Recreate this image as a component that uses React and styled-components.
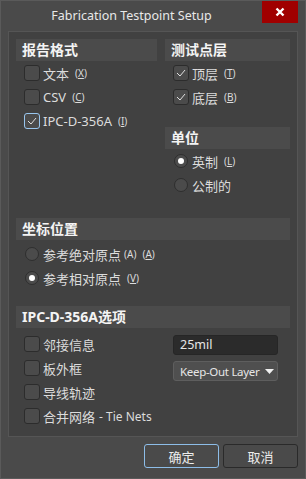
import React from "react";
import styled, { createGlobalStyle } from "styled-components";

const GlobalStyle = createGlobalStyle`
  html, body {
    margin: 0;
    padding: 0;
    background: #4a4a4a;
  }
  * {
    box-sizing: border-box;
  }
`;

const FONT = `"Noto Sans", "Open Sans", "Noto Sans CJK SC", sans-serif`;

const Window = styled.div`
  width: 306px;
  height: 479px;
  background: #4a4a4a;
  border: 1px solid #5a5a5a;
  font-family: ${FONT};
  font-size: 13px;
  color: #dcdcdc;
  display: flex;
  flex-direction: column;
`;

const TitleBar = styled.div`
  height: 29px;
  display: flex;
  align-items: flex-start;
`;

const Title = styled.div`
  flex: 1;
  text-align: center;
  font-size: 12.5px;
  line-height: 29px;
  color: #e8e8e8;
`;

const CloseBtn = styled.div`
  width: 36px;
  height: 22px;
  background: #a00000;
  margin-right: 7px;
  display: flex;
  align-items: center;
  justify-content: center;
`;

const Panel = styled.div`
  margin: 1px 7px 0 7px;
  height: 406px;
  background: #414141;
  border: 1px solid #555555;
  padding: 7px 7px 0 7px;
  display: flex;
  flex-direction: column;
`;

const TopGrid = styled.div`
  display: grid;
  grid-template-columns: 141px 125px;
  column-gap: 8px;
  align-items: start;
`;

const Col = styled.div`
  display: flex;
  flex-direction: column;
`;

const Header = styled.div`
  height: 22px;
  background: #4b4b4b;
  padding-left: 6px;
  font-weight: bold;
  font-size: 14px;
  line-height: 22px;
  color: #f4f4f4;
  margin-top: ${(p) => p.$mt || 0}px;
  margin-bottom: ${(p) => p.$mb || 0}px;
`;

const Row = styled.div`
  height: 24px;
  display: flex;
  align-items: center;
  padding-left: ${(p) => p.$pl || 8}px;
  gap: 3px;
  white-space: nowrap;
`;

const Box = styled.span`
  width: 16px;
  height: 16px;
  border-radius: 3px;
  background: #4b4b4b;
  border: 1px solid ${(p) => (p.$focus ? "#99c6ee" : "#2c2c2c")};
  display: inline-flex;
  align-items: center;
  justify-content: center;
  flex: none;
`;

const Radio = styled.span`
  width: 14px;
  height: 14px;
  border-radius: 50%;
  background: #4b4b4b;
  border: 1px solid #2e2e2e;
  display: inline-flex;
  align-items: center;
  justify-content: center;
  flex: none;
  margin-right: 1px;

  &::after {
    content: "";
    display: ${(p) => (p.$on ? "block" : "none")};
    width: 6px;
    height: 6px;
    border-radius: 50%;
    background: #ffffff;
  }
`;

const Key = styled.span`
  font-size: 10px;
  margin-left: ${(p) => (p.$tight ? 0 : 3)}px;
  color: #dcdcdc;

  u {
    text-decoration: underline;
  }
`;

const Label = styled.span`
  font-size: 13px;
`;

const Small = styled.span`
  font-size: 12px;
  margin-left: 1px;
`;

const Wide = styled.div`
  margin-top: ${(p) => p.$mt}px;
  display: flex;
  flex-direction: column;
`;

const IpcGrid = styled.div`
  display: grid;
  grid-template-columns: 157px 105px;
  margin-top: 4px;
`;

const Controls = styled.div`
  display: flex;
  flex-direction: column;
  gap: 6px;
  padding-top: 3px;
`;

const Input = styled.div`
  height: 20px;
  border-radius: 3px;
  background: #2b2b2b;
  border: 1px solid #262626;
  padding-left: 6px;
  line-height: 18px;
  font-size: 12.5px;
  color: #e6e6e6;
`;

const Select = styled.div`
  height: 20px;
  border-radius: 3px;
  background: #4f4f4f;
  border: 1px solid #5e5e5e;
  padding: 0 3px 0 6px;
  display: flex;
  align-items: center;
  justify-content: space-between;
  font-size: 11.5px;
  letter-spacing: -0.3px;
  white-space: nowrap;
  color: #e6e6e6;
`;

const Footer = styled.div`
  display: flex;
  justify-content: flex-end;
  gap: 4px;
  padding: 7px 7px 0 0;
`;

const Button = styled.div`
  width: 75px;
  height: 24px;
  border-radius: 3px;
  border: 1px solid ${(p) => (p.$primary ? "#8dbde8" : "#2a2a2a")};
  background: #4a4a4a;
  display: flex;
  align-items: center;
  justify-content: center;
  font-size: 13px;
  color: #ececec;
`;

const Check = () => (
  <svg width="10" height="8" viewBox="0 0 10 8">
    <path d="M1 4 L4 7 L9 1" fill="none" stroke="#e0e0e0" strokeWidth="1" />
  </svg>
);

const CheckRow = ({ checked, focus, label, k }) => (
  <Row>
    <Box $focus={focus}>{checked && <Check />}</Box>
    <Label>{label}</Label>
    {k && (
      <Key>
        (<u>{k}</u>)
      </Key>
    )}
  </Row>
);

const RadioRow = ({ on, label, k, pl }) => (
  <Row $pl={pl}>
    <Radio $on={on} />
    <Label>{label}</Label>
    {k && (
      <Key>
        (<u>{k}</u>)
      </Key>
    )}
  </Row>
);

const App = () => {
  return (
    <>
      <GlobalStyle />
      <Window>
        <TitleBar>
          <Title>Fabrication Testpoint Setup</Title>
          <CloseBtn>
            <svg width="10" height="10" viewBox="0 0 10 10">
              <path d="M1.5 1.5 L8.5 8.5 M8.5 1.5 L1.5 8.5" stroke="#fff" strokeWidth="2.4" />
            </svg>
          </CloseBtn>
        </TitleBar>
        <Panel>
          <TopGrid>
            <Col>
              <Header>报告格式</Header>
              <CheckRow label="文本" k="X" />
              <CheckRow label="CSV" k="C" />
              <CheckRow label="IPC-D-356A" k="I" checked focus />
            </Col>
            <Col>
              <Header>测试点层</Header>
              <CheckRow label="顶层" k="T" checked />
              <CheckRow label="底层" k="B" checked />
              <Header $mt={18}>单位</Header>
              <RadioRow label="英制" k="L" on pl={9} />
              <RadioRow label="公制的" pl={9} />
            </Col>
          </TopGrid>
          <Wide $mt={21}>
            <Header $mb={2}>坐标位置</Header>
            <Row $pl={9}>
              <Radio />
              <Label>参考绝对原点</Label>
              <Key $tight>(A)</Key>
              <Key>
                (<u>A</u>)
              </Key>
            </Row>
            <RadioRow label="参考相对原点" k="V" on pl={9} />
          </Wide>
          <Wide $mt={16}>
            <Header>IPC-D-356A选项</Header>
            <IpcGrid>
              <Col>
                <CheckRow label="邻接信息" />
                <CheckRow label="板外框" />
                <CheckRow label="导线轨迹" />
                <Row>
                  <Box />
                  <Label>合并网络</Label>
                  <Small>- Tie Nets</Small>
                </Row>
              </Col>
              <Controls>
                <Input>25mil</Input>
                <Select>
                  <span>Keep-Out Layer</span>
                  <svg width="9" height="5" viewBox="0 0 9 5">
                    <path d="M0 0 H9 L4.5 5 Z" fill="#f0f0f0" />
                  </svg>
                </Select>
              </Controls>
            </IpcGrid>
          </Wide>
        </Panel>
        <Footer>
          <Button $primary>确定</Button>
          <Button>取消</Button>
        </Footer>
      </Window>
    </>
  );
};

export default App;
